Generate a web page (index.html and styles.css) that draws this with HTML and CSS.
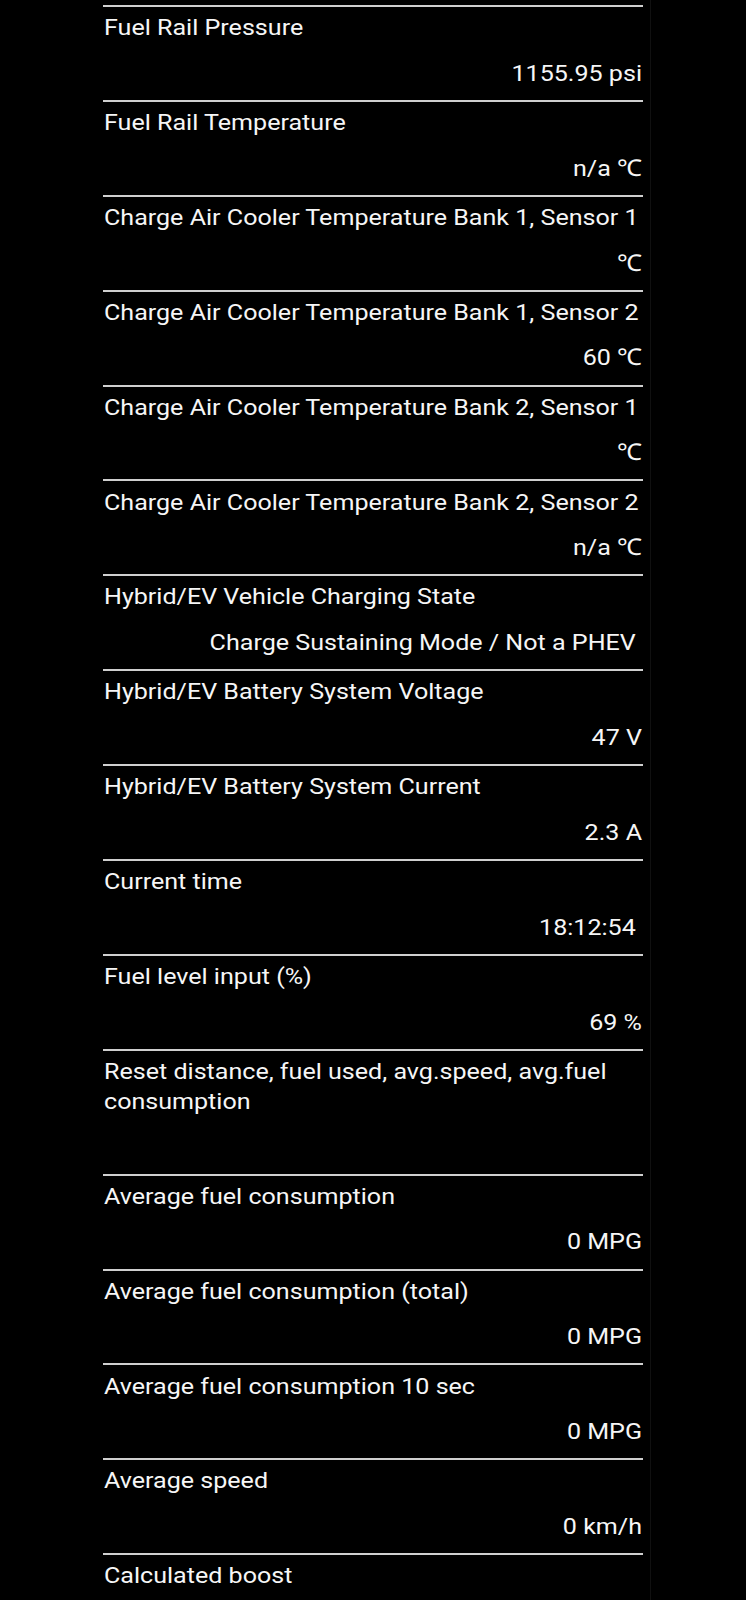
FILE: index.html
```html
<!DOCTYPE html>
<html>
<head>
<meta charset="utf-8">
<link rel="stylesheet" href="styles.css">
</head>
<body>
<div class="screen">
  <div class="panel">
    <div class="row"><div class="label">Fuel Rail Pressure</div><div class="value">1155.95 psi</div></div>
    <div class="row"><div class="label">Fuel Rail Temperature</div><div class="value">n/a ℃</div></div>
    <div class="row"><div class="label">Charge Air Cooler Temperature Bank 1, Sensor 1</div><div class="value"> ℃</div></div>
    <div class="row"><div class="label">Charge Air Cooler Temperature Bank 1, Sensor 2</div><div class="value">60 ℃</div></div>
    <div class="row"><div class="label">Charge Air Cooler Temperature Bank 2, Sensor 1</div><div class="value"> ℃</div></div>
    <div class="row"><div class="label">Charge Air Cooler Temperature Bank 2, Sensor 2</div><div class="value">n/a ℃</div></div>
    <div class="row"><div class="label">Hybrid/EV Vehicle Charging State</div><div class="value">Charge Sustaining Mode / Not a PHEV </div></div>
    <div class="row"><div class="label">Hybrid/EV Battery System Voltage</div><div class="value">47 V</div></div>
    <div class="row"><div class="label">Hybrid/EV Battery System Current</div><div class="value">2.3 A</div></div>
    <div class="row"><div class="label">Current time</div><div class="value">18:12:54 </div></div>
    <div class="row"><div class="label">Fuel level input (%)</div><div class="value">69 %</div></div>
    <div class="row"><div class="label">Reset distance, fuel used, avg.speed, avg.fuel consumption</div><div class="value"> </div></div>
    <div class="row"><div class="label">Average fuel consumption</div><div class="value">0 MPG</div></div>
    <div class="row"><div class="label">Average fuel consumption (total)</div><div class="value">0 MPG</div></div>
    <div class="row"><div class="label">Average fuel consumption 10 sec</div><div class="value">0 MPG</div></div>
    <div class="row"><div class="label">Average speed</div><div class="value">0 km/h</div></div>
    <div class="row"><div class="label">Calculated boost</div></div>
  </div>
</div>
</body>
</html>
```
FILE: styles.css
```css
html, body {
  margin: 0;
  padding: 0;
  background: #000;
}
body {
  width: 746px;
  height: 1600px;
  overflow: hidden;
  font-family: Roboto, "Noto Sans", sans-serif;
  color: #f6f6f6;
}
.screen {
  width: 651px;
  height: 1600px;
  border-right: 1px solid #101010;
  box-sizing: border-box;
}
.panel {
  margin-left: 103px;
  width: 540px;
  padding-top: 5px;
}
.row {
  border-top: 2px solid #cfcfcf;
  padding: 6.1px 0 11.12px 0;
}
.label,
.value {
  font-size: 22.8px;
  line-height: 30px;
  width: 486px;
}
.label {
  margin-left: 1px;
  transform: scaleX(1.1);
  transform-origin: left center;
}
.value {
  margin-top: 15.7px;
  margin-left: auto;
  margin-right: 1px;
  text-align: right;
  white-space: pre;
  transform: scaleX(1.1);
  transform-origin: right center;
}
```
